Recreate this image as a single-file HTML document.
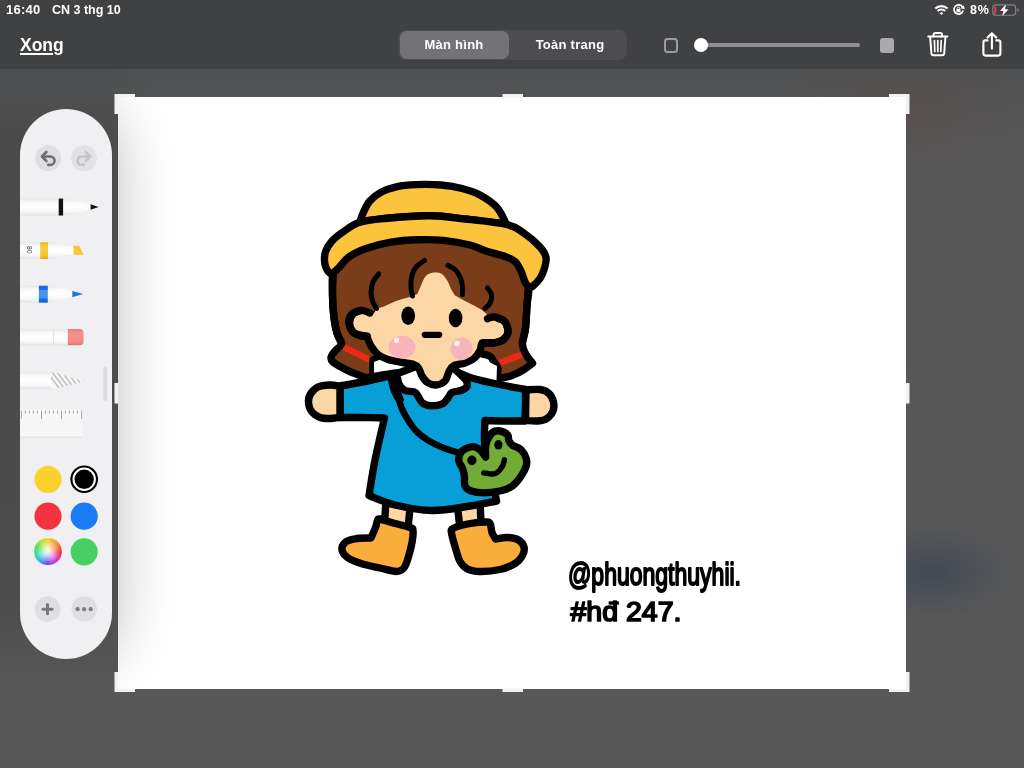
<!DOCTYPE html>
<html lang="vi">
<head>
<meta charset="utf-8">
<title>Markup</title>
<style>
*{box-sizing:border-box;margin:0;padding:0}
html,body{width:1024px;height:768px;overflow:hidden}
body{background:#575758;font-family:"Liberation Sans",sans-serif;color:#fff;position:relative}
.abs{position:absolute}
#bgfx{left:0;top:0;width:1024px;height:768px;
 background:
  radial-gradient(ellipse 88px 48px at 932px 572px, rgba(64,72,84,.9), rgba(64,72,84,.55) 35%, rgba(64,72,84,0) 100%),
  radial-gradient(ellipse 120px 70px at 905px 110px, rgba(92,72,68,.35), rgba(92,72,68,0) 100%),
  linear-gradient(180deg,#505152 69px,#565657 140px,#585859 100%)}
#topbar{left:0;top:0;width:1024px;height:69px;background:#404143}
.st,#xong,.segt{will-change:transform}
.st{font-weight:bold;font-size:12.5px;line-height:14px;white-space:nowrap;color:#fff}
#time{left:5.8px;top:2.8px;font-size:13px;letter-spacing:.25px}
#date{left:51.5px;top:2.8px}
#pct{left:969.5px;top:2.8px;letter-spacing:.9px}
#xong{left:20px;top:35px;font-size:17.5px;line-height:20px;font-weight:bold;text-decoration:underline;text-decoration-thickness:2px;text-underline-offset:2px}
#seg{left:398px;top:29.5px;width:228.5px;height:30.5px;border-radius:8px;background:#4d4d51}
#segsel{left:399.5px;top:31px;width:109.5px;height:27.5px;border-radius:7px;background:#727277}
.segt{letter-spacing:.25px;font-size:13px;font-weight:bold;line-height:16px;top:37px;white-space:nowrap;text-align:center;width:110px}
#s1{left:399px}
#s2{left:515px}
#sq1{left:663.8px;top:38px;width:13.8px;height:14.6px;border:2px solid #9c9ca0;border-radius:3.5px}
#track{left:700px;top:43px;width:160px;height:4px;border-radius:2px;background:#8f8f93}
#thumb{left:693.6px;top:37.8px;width:14.5px;height:14.5px;border-radius:50%;background:#fff}
#sq2{left:880px;top:38px;width:13.5px;height:15px;border-radius:3px;background:#a9a9ae}
#canvas{left:118px;top:97px;width:788px;height:592px;background:#fff}
.h{background:#f3f3f4}
#tool{left:20px;top:109px;width:91.5px;height:549.5px;border-radius:46px;background:#f0f0f2;overflow:hidden}
#toolsh{left:-98px;top:12px;width:91.5px;height:549.5px;border-radius:46px;box-shadow:0 0 60px 6px rgba(0,0,0,.25)}
#canvas{overflow:hidden}
#lstrip{left:0;top:69px;width:150px;height:699px;background:linear-gradient(180deg,rgba(0,0,0,.03) 0,rgba(0,0,0,.03) 22px,rgba(0,0,0,.13) 70px,rgba(0,0,0,.13) 520px,rgba(0,0,0,0) 625px);-webkit-mask-image:linear-gradient(90deg,#000 105px,transparent 150px);mask-image:linear-gradient(90deg,#000 105px,transparent 150px)}
.cbtn{border-radius:50%;background:#dfdfe3;width:26px;height:26px}
.col{border-radius:50%;width:27px;height:27px}
</style>
</head>
<body>
<div id="bgfx" class="abs"></div>
<div id="topbar" class="abs"></div>
<div id="time" class="abs st">16:40</div>
<div id="date" class="abs st">CN 3 thg 10</div>
<div id="pct" class="abs st">8%</div>
<svg class="abs" style="left:928px;top:0" width="96" height="24" viewBox="928 0 96 24">
<!-- wifi -->
<g fill="none" stroke="#fff" stroke-linecap="butt">
<path d="M935.3 8.6A8.7 8.7 0 0 1 947.5 8.6" stroke-width="2.1"/>
<path d="M937.6 11A5.4 5.4 0 0 1 945.2 11" stroke-width="2.1"/>
</g>
<path d="M939.6 13.1A2.6 2.6 0 0 1 943.2 13.1L941.4 15.1Z" fill="#fff"/>
<!-- rotation lock -->
<path d="M962.6 7.2A4.6 4.6 0 1 0 963.1 10.4" fill="none" stroke="#fff" stroke-width="1.7"/>
<path d="M960.6 8.6L964.9 8.9L963.6 5.2Z" fill="#fff"/>
<rect x="956.5" y="9" width="4" height="3.3" rx=".6" fill="#fff"/>
<path d="M957.3 9.2V8.2A1.2 1.2 0 0 1 959.7 8.2V9.2" fill="none" stroke="#fff" stroke-width=".9"/>
<!-- battery -->
<rect x="992.7" y="4.9" width="23" height="10.4" rx="3" fill="none" stroke="#85858a" stroke-width="1.1"/>
<path d="M1017.3 8.1Q1019 9 1019 10.1Q1019 11.2 1017.3 12.1Z" fill="#85858a"/>
<rect x="994.1" y="6.5" width="2.2" height="7.2" rx=".8" fill="#e8384f"/>
<path d="M1006.2 4L1000 10.9H1003.4L1002.2 16.3L1008.5 9.2H1005Z" fill="#fff" stroke="#404143" stroke-width=".8" paint-order="stroke"/>
</svg>

<div id="xong" class="abs">Xong</div>
<div id="seg" class="abs"></div>
<div id="segsel" class="abs"></div>
<div id="s1" class="abs segt">Màn hình</div>
<div id="s2" class="abs segt">Toàn trang</div>
<div id="sq1" class="abs"></div>
<div id="track" class="abs"></div>
<div id="thumb" class="abs"></div>
<div id="sq2" class="abs"></div>
<svg class="abs" style="left:920px;top:26px" width="96" height="38" viewBox="920 26 96 38">
<g fill="none" stroke="#fff" stroke-width="2" stroke-linecap="round" stroke-linejoin="round">
<!-- trash -->
<path d="M928.2 36.6H947.4"/>
<path d="M933.6 36.2V34.6Q933.6 33 935.2 33H940.4Q942 33 942 34.6V36.2"/>
<path d="M930.2 37L931.4 53.3Q931.5 55.3 933.5 55.3H942.1Q944.1 55.3 944.2 53.3L945.4 37"/>
<path d="M934.4 40.5L934.8 51.5M937.8 40.5V51.5M941.2 40.5L940.8 51.5" stroke-width="1.7"/>
<!-- share -->
<path d="M987.5 40.4H985.4Q983.4 40.4 983.4 42.4V53.6Q983.4 55.6 985.4 55.6H998.4Q1000.4 55.6 1000.4 53.6V42.4Q1000.4 40.4 998.4 40.4H996.3" stroke-width="2.1"/>
<path d="M991.9 48.6V33.6M987.6 37.6L991.9 33.2L996.2 37.6" stroke-width="2.1"/>
</g>
</svg>

<div id="lstrip" class="abs"></div>
<div id="canvas" class="abs"><div id="toolsh" class="abs"></div></div>
<svg class="abs" style="left:0;top:0" width="1024" height="768" viewBox="0 0 1024 768">
<g fill="#f2f2f3">
<path d="M114.5 94H135V97H118V114H114.5Z"/>
<path d="M909.5 94H889V97H906V114H909.5Z"/>
<path d="M114.5 692H135V689H118V672H114.5Z"/>
<path d="M909.5 692H889V689H906V672H909.5Z"/>
<rect x="502.5" y="94" width="20.5" height="3.5"/>
<rect x="502.5" y="688.5" width="20.5" height="3.5"/>
<rect x="114.5" y="383" width="3.5" height="20.5"/>
<rect x="906" y="383" width="3.5" height="20.5"/>
</g>
</svg>

<svg class="abs" style="left:0;top:0" width="1024" height="768" viewBox="0 0 1024 768">
<path d="M333.5 270.0C331.4 276.7 332.4 287.0 332.5 295.0C332.6 303.0 333.2 311.7 334.0 318.0C334.8 324.3 335.8 328.8 337.0 333.0C338.2 337.2 341.8 340.5 341.5 343.5C341.2 346.5 336.8 348.7 335.0 351.0C333.2 353.3 331.3 355.7 331.0 357.5C330.7 359.3 331.3 360.4 333.0 362.0C334.7 363.6 337.8 365.2 341.0 367.0C344.2 368.8 347.8 370.8 352.0 372.5C356.2 374.2 362.5 376.9 366.0 377.5C369.5 378.1 371.8 376.2 373.0 376.0C373.0 373.3 373.0 362.7 373.0 360.0C380.8 358.7 401.8 353.0 420.0 352.0C438.2 351.0 469.7 352.3 482.0 354.0C494.3 355.7 491.3 359.7 494.0 362.0C496.7 364.3 497.3 367.0 498.0 368.0C497.8 369.8 497.2 377.2 497.0 379.0C499.5 378.4 507.5 377.1 512.0 375.5C516.5 373.9 520.6 371.6 524.0 369.5C527.4 367.4 531.1 364.2 532.5 363.2C531.6 362.0 528.5 358.4 527.0 356.0C525.5 353.6 524.2 351.3 523.5 349.0C522.8 346.7 522.2 345.5 522.5 342.0C522.8 338.5 524.8 334.2 525.5 328.0C526.2 321.8 526.5 312.2 527.0 305.0C527.5 297.8 529.7 293.3 528.5 285.0C527.3 276.7 536.4 262.5 520.0 255.0C503.6 247.5 459.2 240.0 430.0 240.0C400.8 240.0 361.1 250.0 345.0 255.0C328.9 260.0 335.6 263.3 333.5 270.0Z" fill="#7b3c19" stroke="none" stroke-width="7.4" stroke-linejoin="round" stroke-linecap="round" />
<path d="M343 346.5L371.5 361" fill="none" stroke="#e92b14" stroke-width="6.4" stroke-linejoin="round" stroke-linecap="round" stroke-linecap="butt"/>
<path d="M499 363.2L523 354" fill="none" stroke="#e92b14" stroke-width="6.4" stroke-linejoin="round" stroke-linecap="round" />
<path d="M333.5 270.0C331.4 276.7 332.4 287.0 332.5 295.0C332.6 303.0 333.2 311.7 334.0 318.0C334.8 324.3 335.8 328.8 337.0 333.0C338.2 337.2 341.8 340.5 341.5 343.5C341.2 346.5 336.8 348.7 335.0 351.0C333.2 353.3 331.3 355.7 331.0 357.5C330.7 359.3 331.3 360.4 333.0 362.0C334.7 363.6 337.8 365.2 341.0 367.0C344.2 368.8 347.8 370.8 352.0 372.5C356.2 374.2 362.5 376.9 366.0 377.5C369.5 378.1 371.8 376.2 373.0 376.0C373.0 373.3 373.0 362.7 373.0 360.0C380.8 358.7 401.8 353.0 420.0 352.0C438.2 351.0 469.7 352.3 482.0 354.0C494.3 355.7 491.3 359.7 494.0 362.0C496.7 364.3 497.3 367.0 498.0 368.0C497.8 369.8 497.2 377.2 497.0 379.0C499.5 378.4 507.5 377.1 512.0 375.5C516.5 373.9 520.6 371.6 524.0 369.5C527.4 367.4 531.1 364.2 532.5 363.2C531.6 362.0 528.5 358.4 527.0 356.0C525.5 353.6 524.2 351.3 523.5 349.0C522.8 346.7 522.2 345.5 522.5 342.0C522.8 338.5 524.8 334.2 525.5 328.0C526.2 321.8 526.5 312.2 527.0 305.0C527.5 297.8 529.7 293.3 528.5 285.0C527.3 276.7 536.4 262.5 520.0 255.0C503.6 247.5 459.2 240.0 430.0 240.0C400.8 240.0 361.1 250.0 345.0 255.0C328.9 260.0 335.6 263.3 333.5 270.0Z" fill="none" stroke="#000" stroke-width="7.4" stroke-linejoin="round" stroke-linecap="round" />
<path d="M374 362L374 376.5L392 373.5L416 370.5L436 388L452 370.5L474 378.5L496.5 381L497 366L470 352L400 352Z" fill="#fff" stroke="none" stroke-width="7.4" stroke-linejoin="round" stroke-linecap="round" />
<path d="M374.5 376.5C377.4 376.0 386.9 374.3 392.0 373.5C397.1 372.7 401.0 372.3 405.0 371.8C409.0 371.3 414.2 370.6 416.0 370.3" fill="none" stroke="#000" stroke-width="7.4" stroke-linejoin="round" stroke-linecap="round" />
<path d="M386 500L384.5 524L408 528.5L410.5 503Z" fill="#fdd6a6" stroke="#000" stroke-width="7.4" stroke-linejoin="round" stroke-linecap="round" />
<path d="M457 503L460 528L481 523L480 500Z" fill="#fdd6a6" stroke="#000" stroke-width="7.4" stroke-linejoin="round" stroke-linecap="round" />
<path d="M377.5 520.5C378.2 519.1 377.5 518.6 380.0 519.0C382.5 519.4 387.5 521.4 392.5 522.8C397.5 524.2 406.6 526.2 410.0 527.5C413.4 528.8 412.7 528.0 413.0 530.5C413.3 533.0 412.9 537.6 412.0 542.5C411.1 547.4 408.9 555.7 407.5 560.0C406.1 564.3 405.4 566.6 403.5 568.5C401.6 570.4 399.9 571.6 396.0 571.5C392.1 571.4 385.8 569.3 380.0 568.0C374.2 566.7 366.4 565.2 361.0 563.5C355.6 561.8 350.7 559.8 347.5 557.5C344.3 555.2 342.4 552.5 342.0 550.0C341.6 547.5 342.8 544.4 345.0 542.5C347.2 540.6 350.7 539.5 355.0 538.8C359.3 538.0 368.3 538.1 371.0 538.0C371.8 536.2 374.4 530.4 375.5 527.5C376.6 524.6 376.8 521.9 377.5 520.5Z" fill="#fcae3d" stroke="#000" stroke-width="7.4" stroke-linejoin="round" stroke-linecap="round" />
<path d="M453.0 528.5C455.7 527.0 462.2 525.1 467.5 524.0C472.8 522.9 481.2 522.1 485.0 522.0C488.8 521.9 488.8 521.8 490.0 523.5C491.2 525.2 491.1 529.9 492.0 532.5C492.9 535.1 494.9 537.9 495.5 539.0C497.5 538.8 503.7 537.3 507.5 537.5C511.3 537.7 515.8 538.4 518.5 540.0C521.2 541.6 523.3 544.4 524.0 547.0C524.7 549.6 524.0 552.8 522.5 555.5C521.0 558.2 518.8 561.2 515.0 563.5C511.2 565.8 505.8 568.2 500.0 569.5C494.2 570.8 485.4 571.6 480.0 571.5C474.6 571.4 470.8 570.7 467.5 569.0C464.2 567.3 462.1 565.2 460.0 561.5C457.9 557.8 456.4 551.2 455.0 546.5C453.6 541.8 451.8 536.0 451.5 533.0C451.2 530.0 450.3 530.0 453.0 528.5Z" fill="#fcae3d" stroke="#000" stroke-width="7.4" stroke-linejoin="round" stroke-linecap="round" />
<path d="M340.0 386.0C344.2 385.2 356.5 383.2 365.0 381.5C373.5 379.8 386.7 376.5 391.0 375.5C395.8 374.8 409.8 371.7 420.0 371.0C430.2 370.3 443.1 370.2 452.0 371.5C460.9 372.8 466.0 376.4 473.5 378.5C481.0 380.6 488.3 382.2 497.0 384.0C505.7 385.8 520.8 388.6 525.5 389.5C525.5 391.9 525.6 398.8 525.5 404.0C525.4 409.2 525.1 418.2 525.0 421.0C521.7 421.0 511.7 421.1 505.0 421.0C498.3 420.9 488.3 420.6 485.0 420.5C484.9 423.8 484.2 431.8 484.5 440.0C484.8 448.2 485.3 461.3 487.0 470.0C488.7 478.7 492.9 486.8 494.5 492.0C496.1 497.2 496.2 499.5 496.5 501.0C492.1 501.8 480.8 504.4 470.0 506.0C459.2 507.6 444.5 510.7 432.0 510.5C419.5 510.3 405.5 507.5 395.0 505.0C384.5 502.5 373.3 497.1 369.0 495.5C370.0 489.6 372.4 472.9 375.0 460.0C377.6 447.1 382.9 425.0 384.5 418.0C380.8 417.9 369.4 417.6 362.0 417.5C354.6 417.4 343.7 417.5 340.0 417.5C340.0 412.2 340.0 391.2 340.0 386.0Z" fill="#089fd9" stroke="#000" stroke-width="7.4" stroke-linejoin="round" stroke-linecap="round" />
<path d="M340.0 386.5C338.3 386.2 333.7 384.9 330.0 385.0C326.3 385.1 321.2 385.5 318.0 387.0C314.8 388.5 312.1 391.3 310.5 394.0C308.9 396.7 308.2 400.0 308.5 403.0C308.8 406.0 310.1 409.6 312.0 412.0C313.9 414.4 317.0 416.4 320.0 417.5C323.0 418.6 326.7 418.5 330.0 418.5C333.3 418.5 338.3 417.7 340.0 417.5C340.0 412.3 340.0 391.7 340.0 386.5Z" fill="#fdd6a6" stroke="#000" stroke-width="7.4" stroke-linejoin="round" stroke-linecap="round" />
<path d="M526.0 390.0C528.3 389.9 536.2 388.9 540.0 389.5C543.8 390.1 546.8 391.4 549.0 393.5C551.2 395.6 552.8 399.1 553.5 402.0C554.2 404.9 554.1 408.2 553.0 411.0C551.9 413.8 549.5 416.8 547.0 418.5C544.5 420.2 541.6 420.7 538.0 421.0C534.4 421.3 527.6 420.6 525.5 420.5C525.6 415.4 525.9 395.1 526.0 390.0Z" fill="#fdd6a6" stroke="#000" stroke-width="7.4" stroke-linejoin="round" stroke-linecap="round" />
<path d="M397.0 374.0C397.3 375.7 397.7 381.2 399.0 384.0C400.3 386.8 402.4 389.2 405.0 390.5C407.6 391.8 412.2 390.9 414.5 392.0C416.8 393.1 417.2 395.2 418.5 397.0C419.8 398.8 420.4 401.5 422.5 403.0C424.6 404.5 427.7 405.7 431.0 405.8C434.3 405.9 439.7 405.1 442.5 403.8C445.3 402.5 446.4 399.9 448.0 398.0C449.6 396.1 449.8 393.8 452.0 392.5C454.2 391.2 458.5 391.5 461.0 390.5C463.5 389.5 466.1 388.2 467.0 386.5C467.9 384.8 466.6 381.5 466.5 380.5C463.8 378.1 455.1 368.4 450.0 366.0C444.9 363.6 441.3 366.0 436.0 366.0C430.7 366.0 424.5 364.7 418.0 366.0C411.5 367.3 400.5 372.7 397.0 374.0Z" fill="#fff" stroke="#000" stroke-width="7.4" stroke-linejoin="round" stroke-linecap="round" />
<path d="M371.0 311.0C369.2 312.7 366.5 309.5 363.5 310.0C360.5 310.5 355.3 311.8 353.0 314.0C350.7 316.2 349.5 320.0 349.5 323.0C349.5 326.0 351.1 329.8 353.0 332.0C354.9 334.2 358.8 335.2 361.0 336.0C363.2 336.8 364.8 334.8 366.5 336.5C368.2 338.2 369.1 343.0 371.0 346.0C372.9 349.0 375.2 352.2 378.0 354.5C380.8 356.8 383.9 358.2 388.0 359.5C392.1 360.8 398.4 361.8 402.5 362.5C406.6 363.2 409.8 363.1 412.5 364.0C415.2 364.9 416.9 366.0 418.5 368.0C420.1 370.0 420.5 373.6 422.0 376.0C423.5 378.4 425.2 381.0 427.5 382.5C429.8 384.0 433.1 385.2 436.0 385.0C438.9 384.8 442.8 383.2 445.0 381.0C447.2 378.8 447.5 374.1 449.0 371.5C450.5 368.9 451.3 366.9 454.0 365.5C456.7 364.1 461.7 364.2 465.0 363.0C468.3 361.8 471.5 360.6 474.0 358.5C476.5 356.4 478.6 353.1 480.0 350.5C481.4 347.9 480.4 344.2 482.5 343.0C484.6 341.8 489.4 343.3 492.5 343.0C495.6 342.7 498.9 341.8 501.0 341.0C503.1 340.2 503.8 339.4 505.0 338.0C506.2 336.6 507.8 334.8 508.0 332.5C508.2 330.2 507.3 326.6 506.5 324.5C505.7 322.4 504.5 321.2 503.0 320.0C501.5 318.8 498.8 320.0 497.5 317.5C496.2 315.0 495.4 307.1 495.0 305.0C492.5 300.0 486.7 282.2 480.0 275.0C473.3 267.8 465.0 264.2 455.0 262.0C445.0 259.8 431.7 259.8 420.0 262.0C408.3 264.2 392.7 268.7 385.0 275.0C377.3 281.3 375.8 295.8 374.0 300.0C373.5 301.8 372.8 309.3 371.0 311.0Z" fill="#fdd6a6" stroke="#000" stroke-width="7.4" stroke-linejoin="round" stroke-linecap="round" />
<ellipse cx="402" cy="347" rx="13.4" ry="11.3" fill="#f8b4bb"/>
<ellipse cx="461.6" cy="348.8" rx="10.8" ry="11.4" fill="#f8b4bb"/>
<circle cx="396.5" cy="340.2" r="2.6" fill="#fdeef0"/>
<circle cx="457" cy="343.2" r="2.8" fill="#fdeef0"/>
<ellipse cx="408.2" cy="315.7" rx="6.9" ry="9.2" fill="#000"/>
<ellipse cx="455.6" cy="318" rx="6.8" ry="9.3" fill="#000"/>
<path d="M424.8 334.8L439.2 334.8" fill="none" stroke="#000" stroke-width="6.2" stroke-linejoin="round" stroke-linecap="round" />
<path d="M340.0 262.0C327.0 272.7 348.7 292.7 352.0 300.0C355.3 307.3 357.3 304.4 360.0 306.0C362.7 307.6 366.0 308.4 368.0 309.5C370.0 310.6 371.3 312.0 372.0 312.5C372.8 311.9 374.8 310.1 377.0 309.0C379.2 307.9 381.6 307.4 385.0 306.0C388.4 304.6 393.3 302.0 397.5 300.5C401.7 299.0 406.7 298.1 410.0 297.0C413.3 295.9 416.2 294.5 417.5 294.0C418.1 292.6 419.6 288.5 421.0 285.5C422.4 282.5 423.8 277.9 426.0 275.8C428.2 273.7 431.4 272.9 434.0 272.6C436.6 272.3 439.2 272.4 441.5 273.8C443.8 275.2 445.9 278.5 447.5 281.0C449.1 283.5 449.8 286.6 451.0 289.0C452.2 291.4 454.3 294.4 455.0 295.5C456.8 296.5 462.2 299.5 466.0 301.5C469.8 303.5 474.3 305.7 477.5 307.5C480.7 309.3 483.2 311.0 485.0 312.5C486.8 314.0 487.5 315.8 488.0 316.5C489.0 316.3 491.5 315.2 494.0 315.5C496.5 315.8 500.0 317.4 503.0 318.5C506.0 319.6 508.8 325.1 512.0 322.0C515.2 318.9 520.3 310.0 522.0 300.0C523.7 290.0 537.3 272.7 522.0 262.0C506.7 251.3 460.3 236.0 430.0 236.0C399.7 236.0 353.0 251.3 340.0 262.0Z" fill="#7b3c19" stroke="none" stroke-width="7.4" stroke-linejoin="round" stroke-linecap="round" />
<path d="M369.8 313.0C369.0 312.7 366.7 311.4 365.0 311.0C363.3 310.6 362.1 309.9 359.8 310.6C357.5 311.3 352.8 312.8 351.0 315.0C349.2 317.2 348.6 320.9 349.0 323.8C349.4 326.7 351.3 330.5 353.5 332.5C355.7 334.5 359.9 335.0 362.2 335.6C364.5 336.2 366.4 336.1 367.2 336.2" fill="none" stroke="#000" stroke-width="7.4" stroke-linejoin="round" stroke-linecap="round" />
<path d="M482.5 343.0C484.2 343.0 489.4 343.3 492.5 343.0C495.6 342.7 498.9 341.8 501.0 341.0C503.1 340.2 503.8 339.4 505.0 338.0C506.2 336.6 507.8 334.8 508.0 332.5C508.2 330.2 507.3 326.6 506.5 324.5C505.7 322.4 504.5 321.2 503.0 320.0C501.5 318.8 499.2 318.0 497.5 317.5C495.8 317.0 494.2 316.8 492.5 317.0C490.8 317.2 488.3 318.4 487.5 318.7" fill="none" stroke="#000" stroke-width="7.4" stroke-linejoin="round" stroke-linecap="round" />
<path d="M378.8 274.0C377.8 275.3 374.3 278.9 373.0 282.0C371.7 285.1 371.1 289.3 371.0 292.5C370.9 295.7 371.6 298.3 372.5 301.0C373.4 303.7 375.8 307.2 376.5 308.5" fill="none" stroke="#000" stroke-width="5" stroke-linejoin="round" stroke-linecap="round" />
<path d="M424.5 260.5C423.1 261.6 418.2 264.2 416.0 267.0C413.8 269.8 412.3 274.0 411.5 277.5C410.7 281.0 410.8 284.9 411.0 288.0C411.2 291.1 412.2 294.7 412.5 296.0" fill="none" stroke="#000" stroke-width="5" stroke-linejoin="round" stroke-linecap="round" />
<path d="M448.0 265.5C449.2 266.2 453.4 267.9 455.5 270.0C457.6 272.1 459.3 275.2 460.5 278.0C461.7 280.8 462.2 284.2 462.5 287.0C462.8 289.8 462.5 293.2 462.5 294.5" fill="none" stroke="#000" stroke-width="5" stroke-linejoin="round" stroke-linecap="round" />
<path d="M487.5 288.0C488.1 288.8 490.3 291.2 491.0 293.0C491.7 294.8 491.8 297.1 491.5 299.0C491.2 300.9 490.1 302.9 489.0 304.5C487.9 306.1 485.7 307.8 485.0 308.5" fill="none" stroke="#000" stroke-width="5" stroke-linejoin="round" stroke-linecap="round" />
<path d="M333.5 270.0C333.3 274.2 332.4 287.0 332.5 295.0C332.6 303.0 333.2 311.7 334.0 318.0C334.8 324.3 335.8 328.8 337.0 333.0C338.2 337.2 340.8 341.8 341.5 343.5" fill="none" stroke="#000" stroke-width="7.4" stroke-linejoin="round" stroke-linecap="round" />
<path d="M522.5 342.0C523.0 339.7 524.8 334.2 525.5 328.0C526.2 321.8 526.5 312.0 527.0 305.0C527.5 298.0 528.2 289.2 528.5 286.0" fill="none" stroke="#000" stroke-width="7.4" stroke-linejoin="round" stroke-linecap="round" />
<path d="M359.8 222.3C360.4 220.6 361.8 215.8 363.5 212.2C365.2 208.6 366.9 204.3 369.8 201.0C372.7 197.7 376.4 194.6 381.0 192.2C385.6 189.8 391.4 187.9 397.2 186.6C403.0 185.3 408.7 184.9 416.0 184.6C423.3 184.3 433.3 184.3 441.0 185.0C448.7 185.7 455.5 186.8 462.0 188.5C468.5 190.2 474.2 191.8 480.0 195.0C485.8 198.2 492.6 202.6 497.0 207.5C501.4 212.4 504.9 221.7 506.5 224.5C499.6 223.6 477.8 220.4 465.0 219.0C452.2 217.6 443.3 215.9 430.0 215.8C416.7 215.7 396.7 217.4 385.0 218.5C373.3 219.6 364.0 221.7 359.8 222.3Z" fill="#fcc43c" stroke="#000" stroke-width="7.4" stroke-linejoin="round" stroke-linecap="round" />
<path d="M359.0 222.5C352.0 224.8 347.5 228.9 343.0 232.0C338.5 235.1 334.9 237.7 332.0 241.0C329.1 244.3 326.6 248.2 325.4 252.0C324.2 255.8 324.4 260.4 324.8 263.5C325.2 266.6 326.4 268.7 327.5 270.5C328.6 272.3 330.8 273.8 331.5 274.5C332.8 273.3 336.2 270.4 339.0 267.5C341.8 264.6 344.0 260.4 348.5 257.2C353.0 254.0 358.9 251.0 366.0 248.5C373.1 246.0 382.7 243.6 391.0 242.2C399.3 240.8 407.2 240.1 416.0 239.8C424.8 239.5 434.5 239.5 443.5 240.4C452.5 241.3 462.9 243.2 470.0 245.0C477.1 246.8 480.2 249.1 486.0 251.0C491.8 252.9 500.2 254.8 505.0 256.5C509.8 258.2 512.3 259.1 515.0 261.5C517.7 263.9 519.3 267.6 521.0 271.0C522.7 274.4 523.6 279.2 525.0 282.0C526.4 284.8 528.8 287.0 529.5 288.0C530.1 287.7 531.2 287.6 533.0 286.0C534.8 284.4 538.1 281.4 540.0 278.5C541.9 275.6 543.4 272.0 544.4 268.5C545.4 265.0 546.7 261.1 546.0 257.5C545.3 253.9 543.8 251.2 540.0 247.0C536.2 242.8 528.6 236.2 523.0 232.5C517.4 228.8 516.2 226.8 506.5 224.5C496.8 222.2 477.8 220.4 465.0 219.0C452.2 217.6 443.3 215.9 430.0 215.8C416.7 215.7 396.8 217.4 385.0 218.5C373.2 219.6 366.0 220.2 359.0 222.5Z" fill="#fcc43c" stroke="#000" stroke-width="7.4" stroke-linejoin="round" stroke-linecap="round" />
<path d="M390.5 375.5C390.8 377.2 391.6 382.8 392.5 386.0C393.4 389.2 394.9 392.7 396.0 395.0C397.1 397.3 397.7 397.5 398.8 400.0C399.9 402.5 400.8 406.5 402.5 410.0C404.2 413.5 406.5 417.7 408.8 421.2C411.1 424.7 413.1 428.1 416.2 431.2C419.3 434.3 423.1 437.3 427.5 440.0C431.9 442.7 437.4 445.4 442.5 447.5C447.6 449.6 455.4 451.7 458.0 452.5" fill="none" stroke="#000" stroke-width="6.6" stroke-linejoin="round" stroke-linecap="round" />
<path d="M396.0 380.0C396.4 381.7 397.5 386.7 398.5 390.0C399.5 393.3 401.4 398.3 402.0 400.0" fill="none" stroke="#000" stroke-width="4" stroke-linejoin="round" stroke-linecap="round" />
<path d="M458.8 461.0C458.4 458.6 459.2 455.9 460.0 454.0C460.8 452.1 461.7 451.0 463.8 449.8C465.9 448.6 469.8 446.6 472.5 446.6C475.2 446.6 477.8 448.1 480.0 449.8C482.2 451.5 484.7 455.8 485.6 457.0C485.6 455.5 485.3 450.7 485.5 448.0C485.7 445.3 485.8 443.6 487.0 441.0C488.2 438.4 490.3 434.2 492.5 432.5C494.7 430.8 497.5 430.6 500.0 431.0C502.5 431.4 506.0 433.1 507.5 434.8C509.0 436.5 508.2 439.2 509.0 441.0C509.8 442.8 511.9 444.7 512.5 445.4C514.0 446.1 518.9 447.6 521.2 449.8C523.5 452.0 525.4 455.8 526.2 458.5C527.0 461.2 527.0 463.1 526.2 466.0C525.4 468.9 523.5 472.7 521.2 476.0C518.9 479.3 516.0 483.5 512.5 486.0C509.0 488.5 504.8 489.9 500.0 491.0C495.2 492.1 488.6 492.9 483.8 492.9C479.0 492.9 474.3 492.1 471.2 491.0C468.1 489.9 466.1 488.5 465.0 486.0C463.9 483.5 464.8 478.9 464.4 476.0C464.0 473.1 463.4 471.0 462.5 468.5C461.6 466.0 459.2 463.4 458.8 461.0Z" fill="#72ab35" stroke="#000" stroke-width="7.4" stroke-linejoin="round" stroke-linecap="round" />
<ellipse cx="471.9" cy="460.4" rx="4.6" ry="4.8" fill="#000"/>
<ellipse cx="498.4" cy="444.8" rx="4.1" ry="4.8" fill="#000"/>
<path d="M483.8 472.9C485.2 473.1 490.3 474.1 492.5 474.0C494.7 473.9 495.7 473.4 497.0 472.6C498.3 471.8 499.5 470.5 500.5 469.2C501.5 467.9 502.4 466.6 503.0 465.0C503.6 463.4 504.2 460.7 504.4 459.8" fill="none" stroke="#000" stroke-width="5.4" stroke-linejoin="round" stroke-linecap="round" />
<g font-family="Liberation Sans, sans-serif" font-weight="normal" fill="#000" stroke="#000" stroke-linejoin="round" stroke-linecap="round">
<text x="568" y="584.5" font-size="32" stroke-width="2" textLength="173" lengthAdjust="spacingAndGlyphs">@phuongthuyhii.</text>
<text x="570.5" y="621" font-size="27" stroke-width="1.7" textLength="111" lengthAdjust="spacingAndGlyphs">#hđ 247.</text>
</g>

</svg>
<div id="tool" class="abs">
<svg class="abs" style="left:0;top:0" width="91.5" height="549.5" viewBox="20 109 91.5 549.5">
<defs>
<linearGradient id="body" x1="0" y1="0" x2="0" y2="1">
<stop offset="0" stop-color="#e6e6e8"/><stop offset=".2" stop-color="#f8f8f9"/><stop offset=".5" stop-color="#ffffff"/><stop offset=".78" stop-color="#f8f8f9"/><stop offset="1" stop-color="#e3e3e5"/>
</linearGradient>
<linearGradient id="yb" x1="0" y1="0" x2="0" y2="1"><stop offset="0" stop-color="#e9b521"/><stop offset=".3" stop-color="#f8cf3c"/><stop offset=".75" stop-color="#f6c935"/><stop offset="1" stop-color="#e3ad1d"/></linearGradient>
<linearGradient id="bb" x1="0" y1="0" x2="0" y2="1"><stop offset="0" stop-color="#1269dc"/><stop offset=".22" stop-color="#1a6fe2"/><stop offset=".28" stop-color="#4b90f2"/><stop offset=".72" stop-color="#4b90f2"/><stop offset=".78" stop-color="#1a6fe2"/><stop offset="1" stop-color="#1269dc"/></linearGradient>
<linearGradient id="pk" x1="0" y1="0" x2="0" y2="1"><stop offset="0" stop-color="#e9807c"/><stop offset=".3" stop-color="#f5928e"/><stop offset=".8" stop-color="#f08a86"/><stop offset="1" stop-color="#dc7672"/></linearGradient>
<radialGradient id="rb" cx=".5" cy=".5" r=".5"><stop offset="0" stop-color="#fff" stop-opacity=".95"/><stop offset=".3" stop-color="#fff" stop-opacity=".7"/><stop offset=".85" stop-color="#fff" stop-opacity="0"/></radialGradient>
<clipPath id="hatch"><path d="M51 372.5L58 373L72 378L85 381L72 384.5L58 388L51 388.5Z"/></clipPath>
</defs>
<!-- undo / redo -->
<circle cx="48.1" cy="158.2" r="13" fill="#dfdfe2"/>
<circle cx="84" cy="158.2" r="13" fill="#e2e2e5"/>
<g fill="none" stroke-width="2.6" stroke-linecap="round" stroke-linejoin="round">
<path d="M46.4 152L41.9 156.5L46.4 161M42.4 156.5H50.3A4.2 4.2 0 0 1 50.3 164.9H48.3" stroke="#6d6d72"/>
<path d="M85.7 152L90.2 156.5L85.7 161M89.7 156.5H81.8A4.2 4.2 0 0 0 81.8 164.9H83.8" stroke="#c3c3c7"/>
</g>
<!-- pen -->
<path d="M20 198.5H64Q80 201.5 91 204.6V209.4Q80 212.5 64 215.5H20Z" fill="url(#body)"/>
<rect x="58.7" y="198.6" width="4.4" height="16.9" fill="#111"/>
<path d="M90.6 204.3L98.6 207L90.6 209.7Z" fill="#111"/>
<!-- marker -->
<path d="M20 242.2H52Q58 243 62 246H74V255H62Q58 258 52 258.8H20Z" fill="url(#body)"/>
<rect x="40.2" y="242.2" width="7.8" height="16.8" fill="url(#yb)"/>
<path d="M73.6 245.8H79.2L83.8 254.7H73.6Z" fill="#f5c533"/>
<text x="0" y="0" transform="translate(27.4 246) rotate(90)" font-family="Liberation Sans, sans-serif" font-size="6.8" fill="#3a3a3c">80</text>
<!-- blue pen -->
<path d="M20 285.8H50Q62 288.5 73 291.4V296.8Q62 299.8 50 302.6H20Z" fill="url(#body)"/>
<rect x="38.9" y="285.7" width="8.9" height="17" fill="url(#bb)"/>
<path d="M72.3 291L83.2 294.1L72.3 297.2Z" fill="#2474e6"/>
<!-- eraser -->
<rect x="20" y="329" width="49" height="16.4" fill="url(#body)"/>
<rect x="53.3" y="329.6" width=".8" height="15.2" fill="#d9d9db"/>
<path d="M67.8 328.9H79.6Q83.6 328.9 83.6 332.9V341.3Q83.6 345.3 79.6 345.3H67.8Z" fill="url(#pk)"/>
<!-- lasso pencil -->
<rect x="20" y="371.8" width="31.5" height="17.4" fill="url(#body)"/>
<g clip-path="url(#hatch)"><rect x="50" y="370" width="36" height="20" fill="#f6f6f7"/>
<g stroke="#bbbbbf" stroke-width="1.4"><path d="M44 368L62 392M49 368L67 392M54 368L72 392M59 368L77 392M64 368L82 392M69 368L87 392M74 368L92 392M79 368L97 392"/></g></g>
<!-- scroll -->
<rect x="103.2" y="366.5" width="4" height="34.5" rx="2" fill="#dcdcdf"/>
<!-- ruler -->
<rect x="20" y="409.4" width="62.2" height="28" fill="#f7f7f8"/>
<rect x="20" y="436.6" width="62.2" height="1.2" fill="#e0e0e2"/>
<g stroke="#8c8c90" stroke-width=".75"><path d="M21.4 410.5V419M41.5 410.5V419M61.5 410.5V419M81.6 410.5V419"/>
<path d="M25.4 410.5V413.6M29.4 410.5V413.6M33.4 410.5V413.6M37.4 410.5V413.6M45.5 410.5V413.6M49.5 410.5V413.6M53.5 410.5V413.6M57.5 410.5V413.6M65.5 410.5V413.6M69.5 410.5V413.6M73.5 410.5V413.6M77.5 410.5V413.6"/></g>
<!-- colors -->
<circle cx="48" cy="479.3" r="13.6" fill="#fdd02f"/>
<circle cx="84.2" cy="479.3" r="13.8" fill="#000"/>
<circle cx="84.2" cy="479.3" r="10.7" fill="none" stroke="#fff" stroke-width="2"/>
<circle cx="48" cy="516.2" r="13.6" fill="#f5323f"/>
<circle cx="84.2" cy="516.2" r="13.6" fill="#1a7bf4"/>
<circle cx="84.2" cy="551.8" r="13.6" fill="#46d063"/>
<foreignObject x="34.4" y="538.2" width="27.2" height="27.2"><div style="width:27.2px;height:27.2px;border-radius:50%;background:conic-gradient(from 0deg,#f3d23c,#f59a3c 45deg,#ee3e58 95deg,#d43ee0 140deg,#6a4cf0 185deg,#3cb8f0 225deg,#3ce0a8 258deg,#58e05c 290deg,#bce43c 330deg,#f3d23c)"></div></foreignObject>
<circle cx="48" cy="551.8" r="13.6" fill="url(#rb)"/>
<!-- plus / more -->
<circle cx="47.6" cy="609" r="12.8" fill="#dfdfe2"/>
<circle cx="84.2" cy="609" r="12.8" fill="#dfdfe2"/>
<path d="M42.9 609.2H52.1M47.5 604.6V613.8" stroke="#77777b" stroke-width="3" stroke-linecap="round" fill="none"/>
<g fill="#7b7b80"><circle cx="77.6" cy="609.2" r="2.1"/><circle cx="84.1" cy="609.2" r="2.1"/><circle cx="90.7" cy="609.2" r="2.1"/></g>
</svg>

</div>
</body>
</html>
